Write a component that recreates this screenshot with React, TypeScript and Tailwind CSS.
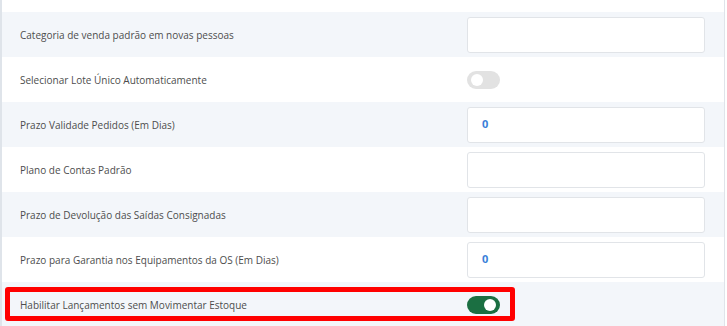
import React from 'react';

type Row = {
  label: string;
  kind: 'text' | 'number' | 'toggle';
  value?: string;
  on?: boolean;
};

const rows: Row[] = [
  { label: 'Categoria de venda padrão em novas pessoas', kind: 'text' },
  { label: 'Selecionar Lote Único Automaticamente', kind: 'toggle', on: false },
  { label: 'Prazo Validade Pedidos (Em Dias)', kind: 'number', value: '0' },
  { label: 'Plano de Contas Padrão', kind: 'text' },
  { label: 'Prazo de Devolução das Saídas Consignadas', kind: 'text' },
  { label: 'Prazo para Garantia nos Equipamentos da OS (Em Dias)', kind: 'number', value: '0' },
  { label: 'Habilitar Lançamentos sem Movimentar Estoque', kind: 'toggle', on: true },
];

function Toggle({ on }: { on?: boolean }) {
  return (
    <div
      className={
        on
          ? 'flex h-[18px] w-[33px] items-center justify-end rounded-full bg-[#1b6f42] px-[4px]'
          : 'flex h-[18px] w-[33px] items-center justify-start rounded-full bg-[#e2e2e2] px-[4px]'
      }
    >
      <div className="h-[12px] w-[12px] rounded-full bg-white" />
    </div>
  );
}

export default function App() {
  return (
    <div
      className="relative h-[326px] w-[727px] overflow-hidden bg-white"
      style={{ fontFamily: '"Open Sans", "Liberation Sans", sans-serif' }}
    >
      <div className="w-[725px] border-r border-l-2 border-[#dfe4ea]">
        <div className="h-[12px] bg-white" />
        {rows.map((row, i) => (
          <div
            key={row.label}
            className={
              i % 2 === 0
                ? 'flex h-[45px] items-center bg-[#f3f6fa] pl-[18px] pr-[19px]'
                : 'flex h-[45px] items-center bg-white pl-[18px] pr-[19px]'
            }
          >
            <div className="flex-1 pt-[1px] text-[10px] text-[#4d4d4d]">{row.label}</div>
            <div className="w-[238px]">
              {row.kind === 'toggle' ? (
                <Toggle on={row.on} />
              ) : (
                <div className="flex h-[36px] items-center rounded-[3px] border border-[#e1e4e8] bg-white pl-[14px] text-[11px] font-bold text-[#3b7fd9]">
                  {row.value}
                </div>
              )}
            </div>
          </div>
        ))}
      </div>

      {/* destaque */}
      <div className="absolute left-[5px] top-[287px] h-[34px] w-[510px] rounded-[3px] border-[5px] border-[#ff0000]" />
    </div>
  );
}
